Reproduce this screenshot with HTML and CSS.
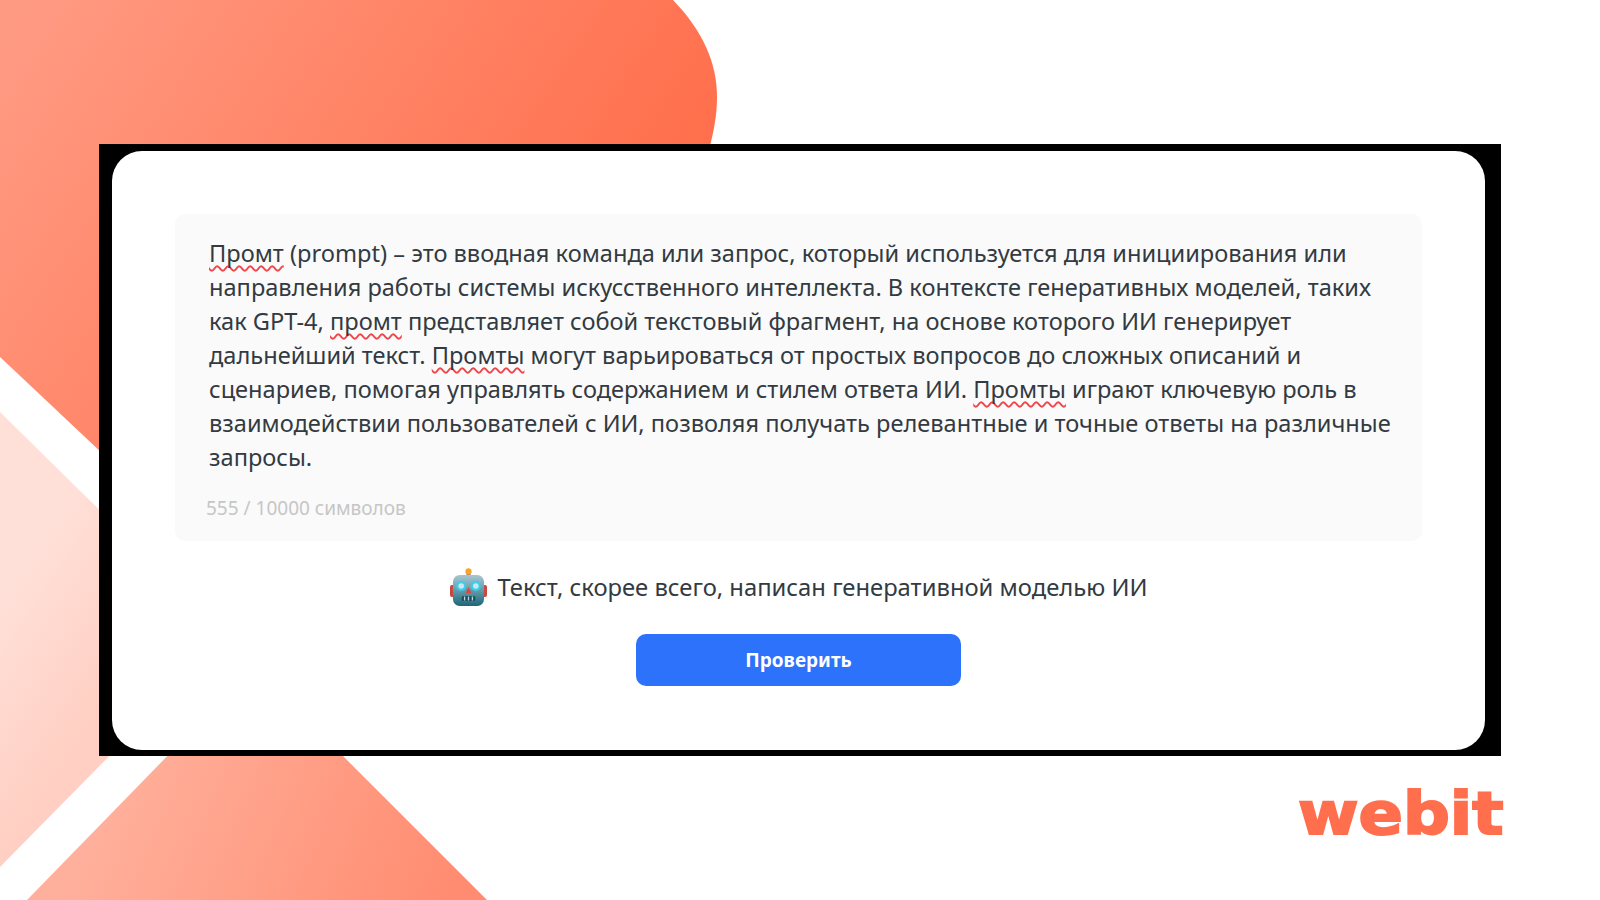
FILE: index.html
```html
<!DOCTYPE html>
<html lang="ru">

<head>
    <meta charset="UTF-8">
    <title>Webit</title>
    <link rel="stylesheet" href="styles.css">
</head>

<body>
    <svg class="shapes" width="1600" height="900" viewBox="0 0 1600 900">
        <defs>
            <linearGradient id="orange" gradientUnits="userSpaceOnUse" x1="40" y1="0" x2="620" y2="380">
                <stop offset="0" stop-color="#ff9a82" />
                <stop offset="1" stop-color="#ff6b47" />
            </linearGradient>
            <linearGradient id="pink" gradientUnits="userSpaceOnUse" x1="0" y1="600" x2="120" y2="680">
                <stop offset="0" stop-color="#ffe0d8" />
                <stop offset="1" stop-color="#ffcfc3" />
            </linearGradient>
            <linearGradient id="salmon" gradientUnits="userSpaceOnUse" x1="120" y1="760" x2="450" y2="900">
                <stop offset="0" stop-color="#ffb09c" />
                <stop offset="1" stop-color="#ff8c70" />
            </linearGradient>
        </defs>
        <path fill="url(#orange)" d="M0 0H673C702 30 717 62 717 97C717 115 714 130 709 150L120 470L0 357Z" />
        <path fill="url(#pink)" d="M0 412L130 540V735L0 867Z" />
        <path fill="url(#salmon)" d="M27 900L180 743H330L487 900Z" />
    </svg>

    <div class="frame">
        <main class="card">
            <section class="editor">
                <p class="prompt-text"><span class="typo">Промт</span> (prompt) – это вводная команда или запрос, который используется для инициирования или направления работы системы искусственного интеллекта. В контексте генеративных моделей, таких как GPT-4, <span class="typo">промт</span> представляет собой текстовый фрагмент, на основе которого ИИ генерирует дальнейший текст. <span class="typo">Промты</span> могут варьироваться от простых вопросов до сложных описаний и сценариев, помогая управлять содержанием и стилем ответа ИИ. <span class="typo">Промты</span> играют ключевую роль в взаимодействии пользователей с ИИ, позволяя получать релевантные и точные ответы на различные запросы.</p>
                <div class="counter">555 / 10000 символов</div>
            </section>

            <div class="verdict">
                <svg class="robot" width="37" height="38" viewBox="0 0 38 38" preserveAspectRatio="none">
                    <defs>
                        <linearGradient id="head" x1="0" y1="0" x2="0" y2="1">
                            <stop offset="0" stop-color="#a9c6d2" />
                            <stop offset="0.55" stop-color="#5b96a8" />
                            <stop offset="1" stop-color="#1f6678" />
                        </linearGradient>
                    </defs>
                    <rect x="0" y="17" width="5" height="12" rx="2" fill="#c8473f" />
                    <rect x="33" y="17" width="5" height="12" rx="2" fill="#c8473f" />
                    <path d="M17 6h4v3h-4z" fill="#7a5fa8" />
                    <circle cx="19" cy="3.5" r="3.2" fill="#f6a623" />
                    <rect x="3" y="7" width="32" height="31" rx="7" fill="url(#head)" />
                    <circle cx="11.5" cy="18" r="5" fill="#36d0ee" />
                    <circle cx="26.5" cy="18" r="5" fill="#36d0ee" />
                    <circle cx="11.5" cy="18" r="2.8" fill="#cfe6ec" />
                    <circle cx="26.5" cy="18" r="2.8" fill="#cfe6ec" />
                    <path d="M19 19l3 6h-6z" fill="#d9483f" />
                    <rect x="12" y="28" width="14" height="5" rx="1.5" fill="#17505f" />
                    <path d="M15 28.5v4M19 28.5v4M23 28.5v4" stroke="#b9d3da" stroke-width="1.4" />
                </svg>
                <span>Текст, скорее всего, написан генеративной моделью ИИ</span>
            </div>

            <button class="check-btn">Проверить</button>
        </main>
    </div>

    <div class="brand">webit</div>
</body>

</html>
```

FILE: styles.css
```css
:root {
    --accent: #ff6f4d;
    --blue: #2d72fb;
    --text: #333a42;
}

body {
    margin: 0;
    width: 1600px;
    height: 900px;
    overflow: hidden;
    position: relative;
    background: #ffffff;
    color: var(--text);
    font-family: 'Noto Sans', sans-serif;
    padding: 144px 0 0 99px;
    box-sizing: border-box;
}

.shapes {
    position: absolute;
    top: 0;
    left: 0;
}

.frame {
    position: relative;
    width: 1402px;
    height: 612px;
    box-sizing: border-box;
    background: #000000;
    padding: 7px 16px 6px 13px;
}

.card {
    height: 100%;
    box-sizing: border-box;
    background: #ffffff;
    border-radius: 30px;
    padding: 63px 63px 0;
    display: flex;
    flex-direction: column;
    align-items: center;
}

.editor {
    align-self: stretch;
    height: 327px;
    box-sizing: border-box;
    background: #fafafa;
    border-radius: 10px;
    padding: 22px 22px 0 34px;
}

.prompt-text {
    margin: 0;
    font-size: 23.6px;
    line-height: 34px;
}

.typo {
    text-decoration: underline wavy #f0454a 1.5px;
    text-decoration-skip-ink: none;
    text-underline-offset: 3px;
}

.counter {
    margin: 22px 0 0 -3px;
    font-size: 19px;
    line-height: 24px;
    color: #c6c6c6;
}

.verdict {
    display: flex;
    align-items: center;
    gap: 11px;
    margin-top: 27px;
    font-size: 23.8px;
    line-height: 38px;
}

.check-btn {
    width: 325px;
    height: 52px;
    margin-top: 28px;
    border: 0;
    border-radius: 10px;
    background: var(--blue);
    color: #ffffff;
    font-family: inherit;
    font-size: 19px;
    font-weight: 700;
}

.brand {
    position: relative;
    width: fit-content;
    margin: 20px 0 0 1199px;
    font-family: 'DejaVu Sans', sans-serif;
    font-size: 59px;
    font-weight: 700;
    line-height: 76px;
    color: var(--accent);
    -webkit-text-stroke: 2px var(--accent);
    transform: scaleX(1.11);
    transform-origin: left center;
}
```
